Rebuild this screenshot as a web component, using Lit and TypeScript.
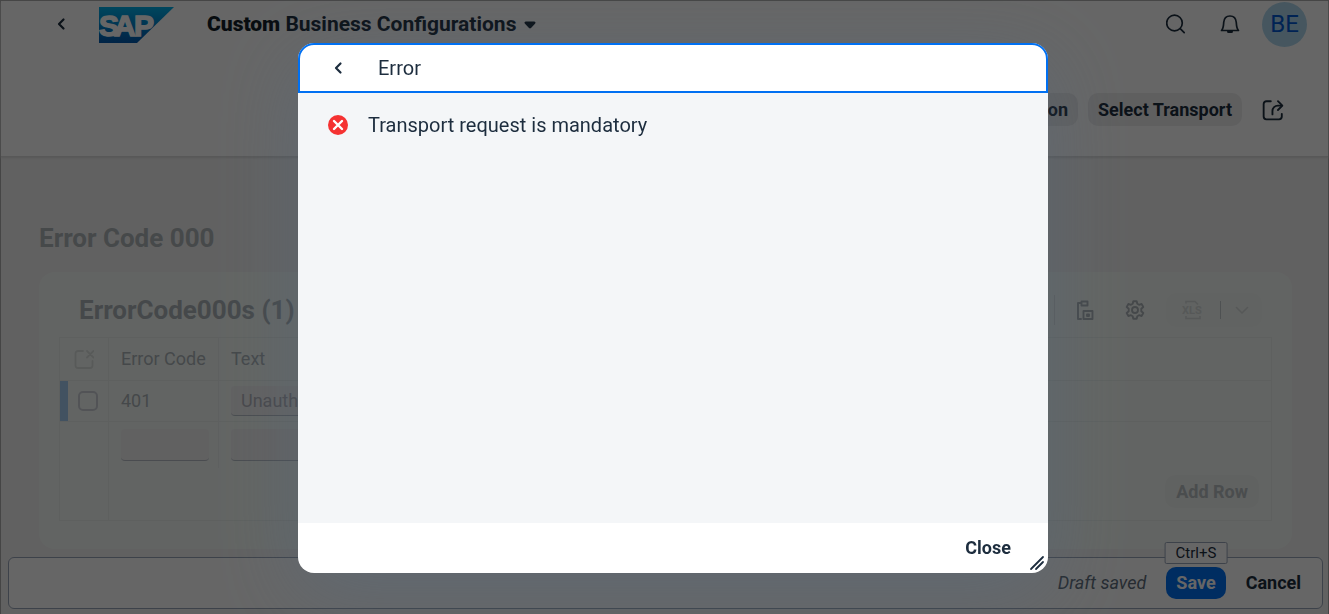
import { LitElement, html, css, svg } from "lit";
import { customElement, state } from "lit/decorators.js";

const stroked = (size: number, body: unknown, width = 2) => html`
  <svg width=${size} height=${size} viewBox="0 0 20 20" fill="none" stroke="currentColor"
    stroke-width=${width} stroke-linecap="round" stroke-linejoin="round" aria-hidden="true">${body}</svg>`;

const icons = {
  back: stroked(20, svg`<path d="M12.5 5.5 8 10l4.5 4.500"/>`, 2.2),
  search: stroked(20, svg`<circle cx="8.500" cy="9" r="7.800"/><path d="m14.200 14.700 4 4"/>`, 1.7),
  bell: stroked(20, svg`<path d="M1.500 16.500c2-2 2-4 2.200-8C4 4.500 6.500 2 10 2s6 2.500 6.300 6.500c.2 4 .2 6 2.200 8z"/><path d="M8.500 17.500h3" stroke-width="3"/>`, 1.7),
  share: stroked(22, svg`<path d="M8 2H4a2.500 2.500 0 0 0-2.500 2.500v11.500A2.500 2.500 0 0 0 4 18.500h11.500A2.500 2.500 0 0 0 18 16v-2.500"/><path d="M9.500 14V11a5 5 0 0 1 5-5H18"/><path d="m14.500 2 4 4-4 4"/>`, 1.7),
  newWindow: stroked(20, svg`<path d="M9 2H4a2.500 2.500 0 0 0-2.500 2.500v12A2.500 2.500 0 0 0 4 19h12a2.500 2.500 0 0 0 2.500-2.500V12"/><path d="m13 2 6.500 6.500M19.500 2 13 8.500"/>`, 1.8),
  paste: stroked(20, svg`<path d="M6 3H3v16h3M6.500 1.500h6v4h-6z"/><path d="M8.500 11h9v8h-9zM12 14.500h2v1.500h-2z"/>`, 1.9),
  gear: stroked(20, svg`<circle cx="10" cy="10" r="3"/><path d="M8.300 1.200h3.400l.6 2.600 1.700 1 2.600-.8 1.700 3-2 1.800v2.400l2 1.800-1.700 3-2.600-.8-1.700 1-.6 2.600H8.300l-.6-2.600-1.700-1-2.600.8-1.700-3 2-1.800V8.800l-2-1.800 1.700-3 2.600.8 1.700-1z"/>`, 1.9),
  chevron: stroked(20, svg`<path d="m4.500 7.500 5.500 5.500 5.500-5.500"/>`, 1.6),
};

@customElement("app-root")
export class AppRoot extends LitElement {
  @state() private code = "401";

  static styles = css`
    :host {
      display: block;
      font-family: Roboto, "Liberation Sans", sans-serif;
      font-size: 18px;
      line-height: 24px;
      color: #1d2d3e;
    }
    *, *::before, *::after { box-sizing: border-box; }
    button, input { font: inherit; color: inherit; }
    button {
      display: inline-flex;
      align-items: center;
      justify-content: center;
      border: 0;
      padding: 0;
      background: transparent;
    }
    svg { display: block; flex: none; }
    h1, h2, h3 { margin: 0; font-weight: 700; }

    .page {
      display: flex;
      flex-direction: column;
      min-height: 100vh;
      border: 1px solid #adadad;
      background: #f3f3f3;
    }
    .top {
      height: 156px;
      background: #fff;
      border-bottom: 1px solid #dcdcdc;
      box-shadow: 0 1px 2px #d8d8d8;
    }
    .shell {
      display: flex;
      align-items: center;
      height: 46px;
      padding: 0 21px 0 50px;
    }
    .logo { margin: 2px 33px 0 28px; }
    .product { gap: 8px; font-size: 21px; font-weight: 700; white-space: pre; }
    .product b { color: #131e29; }
    .caret { margin-top: 2px; }
    .tools { display: flex; align-items: center; gap: 34px; margin-left: auto; }
    .avatar {
      width: 45px;
      height: 45px;
      margin-left: -12px;
      border-radius: 50%;
      background: #b0d8ee;
      color: #0057d2;
      font-size: 24px;
    }
    .actions {
      display: flex;
      justify-content: flex-end;
      align-items: center;
      gap: 10px;
      padding: 46px 44px 0;
    }
    .soft {
      height: 33px;
      padding: 0 10px;
      border-radius: 10px;
      background: #ededee;
      font-weight: 700;
    }
    .tail { min-width: 150px; justify-content: flex-end; }
    .share { margin-left: 10px; }

    .content { flex: 1; padding: 65px 36px 0 38px; color: #adb5ba; }
    .content h1, .content h2 { font-size: 26px; line-height: 32px; }
    .content h1 { color: #b0b6ba; }
    .card {
      margin-top: 18px;
      padding: 20px 20px 28px;
      border-radius: 16px;
      background: #f6fbf8;
    }
    .bar { display: flex; align-items: center; height: 36px; padding: 0 10px 0 20px; }
    .bar-tools { display: flex; align-items: center; gap: 30px; margin-left: auto; }
    .rule { width: 1px; height: 30px; margin-right: -10px; background: #e0e4e4; }
    .export {
      display: flex;
      align-items: center;
      gap: 16px;
      height: 34px;
      margin-left: -9px;
      padding: 0 10px 0 16px;
      border-radius: 10px;
      background: #f2f7f4;
      color: #d8dddc;
    }
    .export button + i { margin-right: -5px; }
    .export i { width: 1px; height: 18px; background: #c4cacc; }
    table {
      width: 100%;
      margin-top: 9px;
      border-collapse: collapse;
      table-layout: fixed;
      border: 1px solid #eaf1ee;
    }
    th, td {
      height: 43px;
      padding: 0 12px;
      border: 1px solid #eaf1ee;
      text-align: left;
      font-weight: 400;
    }
    td { height: 41px; }
    .pick { width: 49px; padding: 0 0 0 14px; }
    .code { width: 110px; }
    .pick svg { color: #dce1df; }
    .selected .pick { padding-left: 18px; box-shadow: inset 8px 0 #a6cdf2; }
    .check {
      display: block;
      appearance: none;
      width: 20px;
      height: 20px;
      margin: 0;
      border: 2px solid #ccd0d8;
      border-radius: 5px;
    }
    .field {
      display: block;
      width: 88px;
      height: 32px;
      padding: 0 10px;
      border: 0;
      border-bottom: 1px solid #b9bfc8;
      border-radius: 4px;
      background: #f3f2f2;
      color: #b5b4bc;
      outline: 0;
    }
    .selected .field { height: 30px; }
    .wide { width: 400px; }
    .blank { height: 46px; }
    .foot td { height: 53px; padding: 0 12px 4px; border-top: 0; }
    .blanks td { border-bottom: 0; }
    .add {
      height: 33px;
      margin-left: auto;
      padding: 0 11px;
      display: flex;
      border-radius: 10px;
      background: #f1f5f3;
      color: #b9c0c2;
      font-weight: 700;
    }
    .footer {
      display: flex;
      align-items: center;
      justify-content: flex-end;
      gap: 20px;
      height: 52px;
      margin: 8px 5px 5px 7px;
      padding: 0 21px;
      border: 1px solid #9aa5b8;
      border-radius: 6px;
      background: #fff;
      font-weight: 700;
    }
    .footer em { font-weight: 400; color: #5f6d7c; }
    .save-wrap { position: relative; }
    .save {
      height: 32px;
      padding: 0 10px;
      border-radius: 10px;
      background: #0070f2;
      color: #fff;
      font-weight: 700;
    }
    .tip {
      position: absolute;
      left: 50%;
      bottom: 35px;
      transform: translateX(-50%);
      padding: 0 10px;
      border: 1px solid #9aa5b8;
      border-radius: 2px;
      background: #fff;
      font-size: 15px;
      line-height: 20px;
      font-weight: 400;
    }

    .overlay {
      position: fixed;
      inset: 0;
      display: flex;
      align-items: center;
      justify-content: center;
      padding: 2px 0 0 17px;
      background: rgba(0, 0, 0, 0.6);
    }
    .dialog {
      display: flex;
      flex-direction: column;
      width: 750px;
      height: 530px;
      border-radius: 16px;
      background: #fff;
      box-shadow: 0 20px 80px rgba(85, 107, 130, 0.4);
    }
    .dialog header {
      display: flex;
      align-items: center;
      gap: 30px;
      height: 50px;
      padding: 0 28px;
      border: 2px solid #0070f2;
      border-radius: 16px 16px 0 0;
    }
    .dialog header h2, .message { font-size: 20px; font-weight: 400; }
    .body { flex: 1; padding: 20px 30px; background: #f4f6f8; }
    .message { display: flex; align-items: center; gap: 20px; margin: 0; }
    .dialog footer {
      position: relative;
      display: flex;
      align-items: center;
      justify-content: flex-end;
      height: 50px;
      padding: 0 37px;
    }
    .close { font-weight: 700; }
    .grip { position: absolute; right: 3px; bottom: 2px; }
  `;

  render() {
    return html`
      <div class="page">
        <div class="top">
          <header class="shell">
            <button aria-label="Back">${icons.back}</button>
            <svg class="logo" width="75" height="36" viewBox="0 0 75 36" role="img" aria-label="SAP">
              <defs><linearGradient id="g" x1="0" y1="0" x2="0" y2="1">
                <stop offset="0" stop-color="#00b0ea"/><stop offset="1" stop-color="#0058ae"/>
              </linearGradient></defs>
              <path d="M0 0h75L38 36H0z" fill="url(#g)"/>
              <text y="29" x="0 15 35" font-family="Liberation Sans" font-weight="700" font-size="30"
                fill="#fff" stroke="#fff" stroke-width="1.5">SAP</text>
            </svg>
            <button class="product"><span><b>Custom</b> Business Configurations</span>
              <svg class="caret" width="12" height="8" viewBox="0 0 12 8"><path d="M2 .5h8c1.500 0 2 1.200 1 2.200L7 7c-.6.600-1.400.600-2 0L1 2.700C0 1.700.5.500 2 .5z" fill="currentColor"/></svg>
            </button>
            <div class="tools">
              <button aria-label="Search">${icons.search}</button>
              <button aria-label="Notifications">${icons.bell}</button>
              <button class="avatar">BE</button>
            </div>
          </header>
          <div class="actions">
            <button class="soft tail">on</button>
            <button class="soft">Select Transport</button>
            <button class="share" aria-label="Share">${icons.share}</button>
          </div>
        </div>

        <main class="content">
          <h1>Error Code 000</h1>
          <section class="card">
            <div class="bar">
              <h2>ErrorCode000s (1)</h2>
              <div class="bar-tools">
                <span class="rule"></span>
                <button aria-label="Paste">${icons.paste}</button>
                <button aria-label="Settings">${icons.gear}</button>
                <div class="export">
                  <button aria-label="Export">
                    <svg width="22" height="20" viewBox="0 0 22 20" fill="none" stroke="currentColor" stroke-width="1.6">
                      <path d="M4 3.500V1.500h9l3 3M4 16v2.500h14V16"/>
                      <text x="0" y="14" font-size="11" font-weight="700" fill="currentColor" stroke="none">XLS</text>
                    </svg>
                  </button>
                  <i></i>
                  <button aria-label="Export options">${icons.chevron}</button>
                </div>
              </div>
            </div>
            <table>
              <thead>
                <tr><th class="pick">${icons.newWindow}</th><th class="code">Error Code</th><th>Text</th></tr>
              </thead>
              <tbody>
                <tr class="selected">
                  <td class="pick"><input class="check" type="checkbox" aria-label="Select row" /></td>
                  <td>${this.code}</td>
                  <td><input class="field wide" aria-label="Text" value="Unauthorized" /></td>
                </tr>
                <tr class="blanks">
                  <td class="blank"></td>
                  <td><input class="field" aria-label="New error code" /></td>
                  <td><input class="field wide" aria-label="New text" /></td>
                </tr>
              </tbody>
              <tfoot>
                <tr class="foot"><td></td><td colspan="2"><button class="add">Add Row</button></td></tr>
              </tfoot>
            </table>
          </section>
        </main>

        <footer class="footer">
          <em>Draft saved</em>
          <div class="save-wrap">
            <button class="save">Save</button>
            <span class="tip" role="tooltip">Ctrl+S</span>
          </div>
          <button>Cancel</button>
        </footer>
      </div>

      <div class="overlay">
        <section class="dialog" role="dialog" aria-modal="true" aria-labelledby="title">
          <header>
            <button aria-label="Back">${icons.back}</button>
            <h2 id="title">Error</h2>
          </header>
          <div class="body">
            <p class="message">
              <svg width="20" height="20" viewBox="0 0 20 20"><circle cx="10" cy="10" r="10" fill="#f53232"/>
                <path d="m6 6 8 8m0-8-8 8" stroke="#fff" stroke-width="2.400" stroke-linecap="round"/></svg>
              Transport request is mandatory
            </p>
          </div>
          <footer>
            <button class="close">Close</button>
            <svg class="grip" width="16" height="16" viewBox="0 0 16 16" fill="none" stroke="#1d2d3e"
              stroke-width="1.800" stroke-linecap="round"><path d="M2 14 14 2M7 14l7-7"/></svg>
          </footer>
        </section>
      </div>
    `;
  }
}
